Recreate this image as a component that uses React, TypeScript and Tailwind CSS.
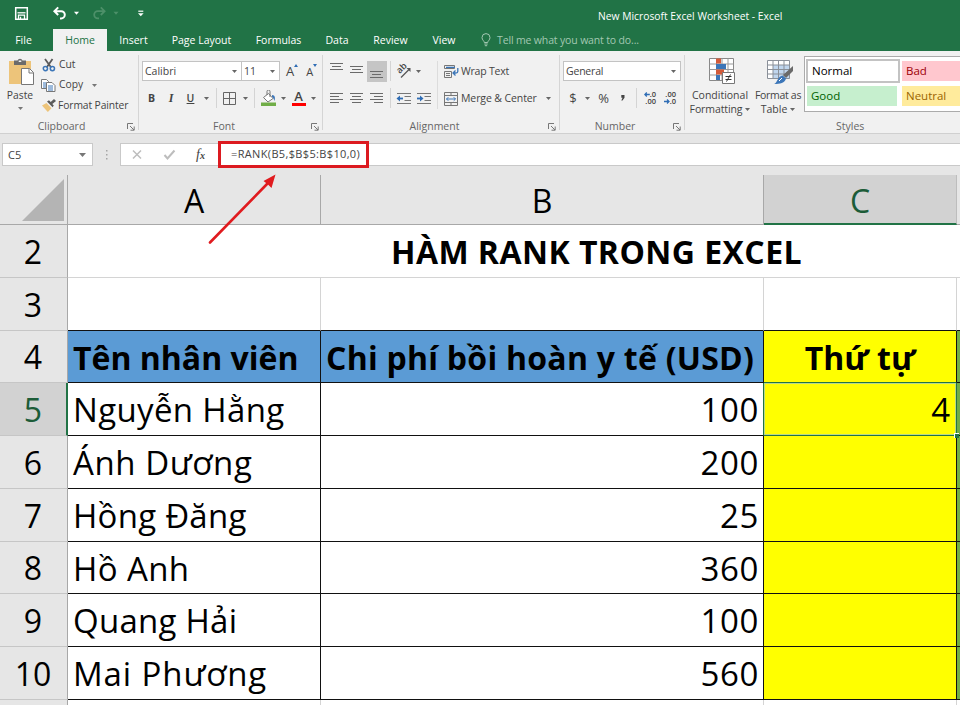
import type { ReactNode } from "react";
import clsx from "clsx";

const ROWS = [
  { n: 5, name: "Nguyễn Hằng", cost: "100", rank: "4", h: "h-[53px]", nameCls: "tracking-[0.35px]" },
  { n: 6, name: "Ánh Dương", cost: "200", rank: "", h: "h-[53px]", nameCls: "tracking-[0.6px]" },
  { n: 7, name: "Hồng Đăng", cost: "25", rank: "", h: "h-[53px]", nameCls: "tracking-[0.25px]" },
  { n: 8, name: "Hồ Anh", cost: "360", rank: "", h: "h-[52px]", nameCls: "tracking-[0.4px]" },
  { n: 9, name: "Quang Hải", cost: "100", rank: "", h: "h-[53px]", nameCls: "tracking-[0.25px]" },
  { n: 10, name: "Mai Phương", cost: "560", rank: "", h: "h-[53px]", nameCls: "tracking-[0.9px]" },
];

const TABS = [
  { label: "Insert", w: "w-[53px]" },
  { label: "Page Layout", w: "w-[83px]" },
  { label: "Formulas", w: "w-[71px]" },
  { label: "Data", w: "w-[46px]" },
  { label: "Review", w: "w-[61px]" },
  { label: "View", w: "w-[46px]" },
];

function Caret({ className }: { className?: string }) {
  return (
    <svg className={clsx("shrink-0", className)} width="5" height="3" viewBox="0 0 5 3">
      <path d="M0 0h5L2.5 3z" fill="currentColor" />
    </svg>
  );
}

function Slot({ w, children }: { w: string; children?: ReactNode }) {
  return <div className={clsx("flex h-full shrink-0 items-center justify-center", w)}>{children}</div>;
}

function Sep() {
  return <div className="h-5 w-px shrink-0 bg-[#d4d4d4]" />;
}

function Launcher() {
  return (
    <svg width="8" height="8" viewBox="0 0 8 8" fill="none" stroke="#777" strokeWidth="1">
      <path d="M.5 6V.5H6M3 3l4 4M7.2 3.5v3.7H3.5" />
    </svg>
  );
}

function Group({ label, w, launcher, pad, children }: { label: string; w: string; launcher?: boolean; pad?: string; children: ReactNode }) {
  return (
    <div className={clsx("flex h-[82px] shrink-0 flex-col", w)}>
      <div className="h-[67px]">{children}</div>
      <div className="flex h-[15px] items-center pt-[2px]">
        <div className={clsx("flex-1 text-center text-[#666]", pad)}>{label}</div>
        {launcher && (
          <div className="mr-[3px]">
            <Launcher />
          </div>
        )}
      </div>
    </div>
  );
}

function Divider() {
  return <div className="mt-1 h-[75px] w-px shrink-0 bg-[#d5d5d5]" />;
}

function Lines({ rows }: { rows: [number, number][] }) {
  return (
    <svg width="14" height="12" viewBox="0 0 14 12" stroke="#6a6a6a" strokeWidth="1">
      {rows.map(([a, b], i) => (
        <path key={i} d={`M${a} ${i * 3 + 1.5}H${b}`} />
      ))}
    </svg>
  );
}

function Indent({ right }: { right?: boolean }) {
  return (
    <svg width="16" height="13" viewBox="0 0 16 13" fill="none" className="shrink-0">
      <path d="M1 1.5h14M8.5 4.5H15M8.5 8.5H15M1 11.5h14" stroke="#777" />
      <path d={right ? "M1 6.5h4" : "M3 6.5h4"} stroke="#2f6db5" strokeWidth="1.8" />
      <path d={right ? "M4 3.5l3.500 3-3.500 3z" : "M4 3.500l-3.500 3 3.500 3z"} fill="#2f6db5" />
    </svg>
  );
}

function TitleBar() {
  return (
    <div className="flex h-[51px] flex-col bg-[#217346] text-white">
      <div className="flex h-[29px] items-center">
        <svg className="shrink-0" width="160" height="29" viewBox="0 0 160 29" fill="none">
          <path d="M15.7 7.7h11.6v11.6H15.7z" stroke="#fff" strokeWidth="1.5" />
          <path d="M17.5 12.8h8" stroke="#fff" strokeWidth="1.3" />
          <path d="M18.5 19v-3.8h6V19M20.5 19v-2.2" stroke="#fff" strokeWidth="1.3" />
          <path d="M54.5 11.2h6.7a3.6 3.6 0 0 1 0 7.2H60M58.2 7.4l-3.8 3.8 3.8 3.8" stroke="#fff" strokeWidth="2" />
          <path d="M74 11.7h5l-2.5 3z" fill="#fff" />
          <path d="M104.5 11.2h-6.7a3.6 3.6 0 0 0 0 7.2H99M100.8 7.4l3.8 3.8-3.8 3.8" stroke="#4d9069" strokeWidth="1.8" />
          <path d="M113.5 11.7h5l-2.5 3z" fill="#4d9069" />
          <path d="M138.3 11.2h5" stroke="#fff" strokeWidth="1.2" />
          <path d="M138 13.3h5.6l-2.8 3z" fill="#fff" />
        </svg>
        <div className="ml-[438px] mt-[5px] whitespace-nowrap text-[10.3px]">New Microsoft Excel Worksheet - Excel</div>
      </div>
      <div className="flex h-[22px] items-center whitespace-nowrap text-[10.5px]">
        <div className="w-[47px] pt-[2px] text-center">File</div>
        <div className="ml-1.5 flex h-full w-[54px] items-center justify-center bg-[#f1f1f1] pt-[2px] text-[#217346]">Home</div>
        {TABS.map((t) => (
          <div key={t.label} className={clsx("pt-[2px] text-center", t.w)}>{t.label}</div>
        ))}
        <svg className="ml-[14px]" width="10" height="14" viewBox="0 0 10 14" fill="none" stroke="#a3c8b2">
          <path d="M3.3 9.5C3.3 8 1 7 1 4.6a4 4 0 0 1 8 0C9 7 6.7 8 6.7 9.5zM3.3 11h3.4M3.8 12.7h2.4" />
        </svg>
        <div className="ml-[6px] pt-[2px] tracking-[-0.15px] text-[#a3c8b2]">Tell me what you want to do...</div>
      </div>
    </div>
  );
}

function Clipboard() {
  return (
    <Group label="Clipboard" w="w-[138px]" launcher pad="pr-[4px]">
      <div className="flex">
        <div className="flex w-10 flex-col items-center">
          <svg className="ml-[3px] mt-[6px]" width="27" height="29" viewBox="0 0 27 29">
            <path d="M1 4h22v23H1z" fill="#edc47a" />
            <path d="M6 3.5h3.5a2.7 2.7 0 0 1 5 0H18V8H6z" fill="#6b6b6b" />
            <path d="M10.7 3.5h2.6v1.6h-2.6z" fill="#f1f1f1" />
            <path d="M13.5 11.5h8l4 4v12h-12z" fill="#fff" stroke="#777" />
            <path d="M21 11.5v4.5h4.5" fill="none" stroke="#777" />
          </svg>
          <div className="mt-[2px] text-[10.3px]">Paste</div>
          <Caret className="mt-1 text-[#777]" />
        </div>
        <div className="flex flex-col pt-[3px] text-[10.3px]">
          <div className="flex h-[21px] items-center">
            <svg width="14" height="14" viewBox="0 0 14 14" fill="none" strokeWidth="1.5" className="mr-[3px] ml-[2px]">
              <path d="M3 1l6.2 8.5M10.5 1L4.6 9.5" stroke="#5b5b5b" strokeWidth="1.8" />
              <circle cx="3.4" cy="10.6" r="2.1" stroke="#3c76b8" />
              <circle cx="10.4" cy="10.6" r="2.1" stroke="#3c76b8" />
            </svg>
            Cut
          </div>
          <div className="flex h-[20px] items-center">
            <svg width="15" height="13" viewBox="0 0 15 13" fill="#fff" stroke="#777" className="mr-[3px] ml-px">
              <path d="M.5.5h5l2 2v7h-7z" />
              <path d="M2 4h3M2 6h3M2 8h3" stroke="#3c76b8" />
              <path d="M5.5 3.5h5.5l3 3v6H5.5z" />
              <path d="M7 7h5M7 9h5M7 11h5" stroke="#3c76b8" />
            </svg>
            Copy
            <Caret className="ml-[9px] text-[#777]" />
          </div>
          <div className="flex h-[21px] items-center whitespace-nowrap tracking-[-0.1px]">
            <svg width="14" height="13" viewBox="0 0 14 13" className="mr-[2px] ml-[2px]">
              <path d="M0 6.5L4.5 4l5 5.2L5.8 13z" fill="#edc47a" />
              <path d="M5 2.6l5.6 5.6 1.2-1.6-1.5-1.7L14 2 12 0 8.7 3 7 1.2z" fill="#5b5b5b" />
            </svg>
            Format Painter
          </div>
        </div>
      </div>
    </Group>
  );
}

function FontGroup() {
  return (
    <Group label="Font" w="w-[183px]" launcher pad="pr-[2px]">
      <div className="flex flex-col pl-[3px] pt-[10px]">
        <div className="flex h-5 items-center">
          <div className="flex h-5 w-[100px] items-center justify-between border border-[#c3c3c3] bg-white px-[2px] pr-1">
            <span className="pt-px text-[#444]">Calibri</span>
            <Caret className="text-[#666]" />
          </div>
          <div className="-ml-px flex h-5 w-[39px] items-center justify-between border border-[#c3c3c3] bg-white px-[2px] pr-1">
            <span className="pt-px text-[#444]">11</span>
            <Caret className="text-[#666]" />
          </div>
          <div className="ml-[6px] flex items-start">
            <span className="text-[13px] leading-5">A</span>
            <svg className="mt-[3px]" width="4" height="3" viewBox="0 0 4 3"><path d="M0 3h4L2 0z" fill="#2f6db5" /></svg>
          </div>
          <div className="ml-2 flex items-start">
            <span className="pt-[1px] text-[11px] leading-5">A</span>
            <svg className="mt-[3px]" width="4" height="3" viewBox="0 0 4 3"><path d="M0 0h4L2 3z" fill="#2f6db5" /></svg>
          </div>
        </div>
        <div className="mt-[7px] flex h-5 items-center">
          <Slot w="w-[19px]"><span className="pt-px font-bold">B</span></Slot>
          <Slot w="w-5"><span className="font-['Liberation_Serif'] text-[12px] font-bold italic">I</span></Slot>
          <Slot w="w-[19px]"><span className="pt-px font-semibold underline">U</span></Slot>
          <Slot w="w-3"><Caret className="text-[#666]" /></Slot>
          <Slot w="w-[4px]" />
          <Sep />
          <Slot w="w-[25px]">
            <svg width="13" height="13" viewBox="0 0 13 13" fill="none" stroke="#666"><path d="M.5.5h12v12H.5zM6.5 0v13M0 6.5h13" /></svg>
          </Slot>
          <Slot w="w-[7px]"><Caret className="text-[#666]" /></Slot>
          <Slot w="w-[5px]" />
          <Sep />
          <Slot w="w-[26px]">
            <svg width="15" height="16" viewBox="0 0 15 16" fill="none">
              <path d="M2.5 7.5l5-4 4.5 5-5 3.5z" fill="#fff" stroke="#777" />
              <path d="M6 5V1.5a1.5 1.5 0 0 1 3 0V7" stroke="#777" />
              <path d="M11 5c3 0 3.6 3 2.4 6-.8-2-.9-3.4-2.4-4z" fill="#3c76b8" />
              <path d="M0 12.5h15V16H0z" fill="#70ad47" />
            </svg>
          </Slot>
          <Slot w="w-[5px]"><Caret className="text-[#666]" /></Slot>
          <Slot w="w-[25px]">
            <div className="flex h-4 w-[14px] items-start justify-center border-b-[3px] border-[#f00] text-[13px] font-semibold leading-[13px]">A</div>
          </Slot>
          <Slot w="w-[5px]"><Caret className="text-[#666]" /></Slot>
        </div>
      </div>
    </Group>
  );
}

function Alignment() {
  return (
    <Group label="Alignment" w="w-[236px]" launcher pad="pr-[2px]">
      <div className="flex pl-1 pt-[10px]">
        <div className="flex w-[110px] flex-col">
          <div className="flex h-5 items-center">
            <Slot w="w-5"><div className="pb-1.5"><Lines rows={[[0, 13], [2, 11], [0, 13]]} /></div></Slot>
            <Slot w="w-5"><Lines rows={[[0, 13], [2, 11], [0, 13]]} /></Slot>
            <div className="flex h-[21px] w-5 items-end justify-center bg-[#c5c5c5]"><Lines rows={[[0, 13], [2, 11], [0, 13]]} /></div>
            <Slot w="w-[3px]" />
            <Sep />
            <Slot w="w-[25px]">
              <div className="relative h-[14px] w-[15px]">
                <span className="absolute left-0 -top-px -rotate-45 text-[9px] leading-[10px] font-semibold">ab</span>
                <svg className="absolute inset-0" width="15" height="14" viewBox="0 0 15 14" fill="none" stroke="#555">
                  <path d="M5 13.5L13 5.500" strokeWidth="1.2" />
                  <path d="M14.500 4v4L10.500 4z" fill="#555" stroke="none" />
                </svg>
              </div>
            </Slot>
            <Slot w="w-[5px]"><Caret className="text-[#666]" /></Slot>
          </div>
          <div className="mt-[7px] flex h-5 items-center">
            <Slot w="w-5"><Lines rows={[[0, 13], [0, 9], [0, 13], [0, 9]]} /></Slot>
            <Slot w="w-5"><Lines rows={[[0, 13], [2, 11], [0, 13], [2, 11]]} /></Slot>
            <Slot w="w-5"><Lines rows={[[0, 13], [4, 13], [0, 13], [4, 13]]} /></Slot>
            <Slot w="w-[3px]" />
            <Sep />
            <Slot w="w-[26px]"><Indent /></Slot>
            <Slot w="w-[14px]"><Indent right /></Slot>
          </div>
        </div>
        <div className="h-[48px] w-px bg-[#dcdcdc]" />
        <div className="flex flex-col pl-1.5 whitespace-nowrap">
          <div className="flex h-5 items-center pt-px tracking-[-0.2px]">
            <svg width="15" height="14" viewBox="0 0 15 14" fill="none" stroke="#777" className="mr-[2px]">
              <path d="M.5.5h10v3H.5zM.5 6.500h7v6h-7zM2 8.500h4M2 10.500h4" />
              <path d="M2 2.3h9M13.8 3v3.5c0 1-.8 1.5-2 1.5H9.5M11.5 5.5L9 8l2.5 2.5" stroke="#3c76b8" strokeWidth="1.3" />
            </svg>
            Wrap Text
          </div>
          <div className="mt-[7px] flex h-5 items-center pt-px tracking-[-0.1px]">
            <svg width="14" height="14" viewBox="0 0 14 14" fill="none" stroke="#777" className="mr-[3px]">
              <path d="M.5.5h13v13H.5zM.5 3.5h13M.5 10.5h13M7 .5v3M7 10.5v3" />
              <path d="M2.5 7h9M4.3 5.2L2.5 7l1.8 1.8M9.7 5.2L11.5 7 9.7 8.8" stroke="#3c76b8" />
            </svg>
            Merge &amp; Center
            <Caret className="ml-[9px] text-[#666]" />
          </div>
        </div>
      </div>
    </Group>
  );
}

function Decimals({ more }: { more?: boolean }) {
  const arrow = (
    <svg width="6" height="5" viewBox="0 0 6 5" fill="none" stroke="#2f6db5" strokeWidth="1.3">
      <path d={more ? "M.8 2.5h5M2.8.5l-2 2 2 2" : "M0 2.5h5M3 .5l2 2-2 2"} />
    </svg>
  );
  return (
    <div className="flex w-[15px] flex-col text-[7.5px] leading-[7px] font-semibold">
      <div className="flex items-center justify-end">{more && arrow}<span>{more ? ".0" : ".00"}</span></div>
      <div className="flex items-center justify-end">{!more && arrow}<span>{more ? ".00" : ".0"}</span></div>
    </div>
  );
}

function NumberGroup() {
  return (
    <Group label="Number" w="w-[124px]" launcher pad="pr-[3px]">
      <div className="flex flex-col pl-[3px] pt-[10px]">
        <div className="flex h-5 w-[118px] items-center justify-between border border-[#c3c3c3] bg-white pl-[2px] pr-1">
          <span className="pt-px tracking-[-0.2px]">General</span>
          <Caret className="text-[#666]" />
        </div>
        <div className="mt-[7px] flex h-5 items-center text-[13px]">
          <Slot w="w-5"><span className="pt-px">$</span></Slot>
          <Slot w="w-[9px]"><Caret className="text-[#666]" /></Slot>
          <Slot w="w-[23px]"><span className="pt-px">%</span></Slot>
          <Slot w="w-[15px]">
            <svg width="4" height="6" viewBox="0 0 4 6"><path d="M.3 0h3.2v2.7L1.5 5.5H.3L1.6 2.7H.3z" fill="#444" /></svg>
          </Slot>
          <Slot w="w-[6px]" />
          <Sep />
          <Slot w="w-[23px]"><Decimals more /></Slot>
          <Slot w="w-[17px]"><Decimals /></Slot>
        </div>
      </div>
    </Group>
  );
}

function Styles() {
  return (
    <div className="flex h-[82px] flex-1 flex-col overflow-hidden">
      <div className="flex h-[67px] whitespace-nowrap">
        <div className="flex w-[70px] shrink-0 flex-col items-center pt-[6px] leading-[14px]">
          <svg className="ml-[3px]" width="28" height="28" viewBox="0 0 28 28" fill="none">
            <path d="M1.5 1.5h24v22h-24z" fill="#fff" stroke="#888" />
            <path d="M1.5 7h24M1.5 12.5h24M1.5 18h24M8.5 1.5v22M14 1.5v22M20 1.5v22" stroke="#999" />
            <path d="M8 1.5h5v5H8zM8 12.5h8v5H8z" fill="#d35b3a" />
            <path d="M8 7h10v5H8zM8 18h4v5H8z" fill="#3c76b8" />
            <path d="M14.5 15.5h12v11h-12z" fill="#fff" stroke="#777" />
            <path d="M17.5 19.5h6M17.5 22.5h6M22.5 17.5l-4 7" stroke="#333" />
          </svg>
          <div className="mt-[3px]">Conditional</div>
          <div className="flex items-center tracking-[-0.1px]">Formatting<Caret className="ml-[3px] text-[#666]" /></div>
        </div>
        <div className="flex w-[46px] shrink-0 flex-col items-center pt-[6px] leading-[14px]">
          <svg className="ml-[3px]" width="28" height="28" viewBox="0 0 28 28" fill="none">
            <path d="M1.5 3.5h22v18h-22z" fill="#fff" />
            <path d="M7 8h17v14H7z" fill="#c0d6ee" />
            <path d="M1.5 3.5h22v18h-22zM1.5 8h22M1.5 12.5h22M1.5 17h22M7 3.5v18M12.5 3.5v18M18 3.5v18" stroke="#8a9099" />
            <path d="M27 9v5l-7 7-3-3z" fill="#6a6a6a" />
            <path d="M16.5 18.5l3.5 3c-1 4.5-6 5.5-12 5.5 3.5-1 3-7 8.5-8.5z" fill="#3c76b8" />
            <path d="M13 24l3-3" stroke="#fff" />
          </svg>
          <div className="mt-[3px] tracking-[-0.3px]">Format as</div>
          <div className="flex items-center">Table<Caret className="ml-[3px] text-[#666]" /></div>
        </div>
        <div className="ml-[3px] mt-[5px] grid h-[56px] w-[190px] shrink-0 grid-cols-[96px_90px] grid-rows-[26px_20px] border border-[#ababab] bg-white pt-px text-[11.5px]">
          <div className="mt-px ml-px flex h-6 w-[94px] items-center border-2 border-[#c3c3c3] bg-white pl-1 text-black">Normal</div>
          <div className="ml-px mt-[3px] flex h-5 items-center bg-[#ffc7ce] pl-1 text-[#9c0006]">Bad</div>
          <div className="ml-[2px] mt-[2px] flex h-5 w-[90px] items-center bg-[#c6efce] pl-1 text-[#006100]">Good</div>
          <div className="ml-px mt-[2px] flex h-5 items-center bg-[#ffeb9c] pl-1 text-[#9c6500]">Neutral</div>
        </div>
      </div>
      <div className="flex h-[15px] items-center pt-[2px] pl-[151px] text-[#666]">Styles</div>
    </div>
  );
}

function FormulaBar() {
  return (
    <div className="flex h-[41px] items-start pl-0.5 pt-[9px] text-[10.5px] text-[#444]">
      <div className="flex h-[23px] w-[91px] items-center justify-between border border-[#c9c9c9] bg-white pl-[5px] pr-1.5">
        <span className="pt-px text-[11px]">C5</span>
        <svg width="7" height="4" viewBox="0 0 7 4"><path d="M0 0h7L3.5 4z" fill="#777" /></svg>
      </div>
      <svg className="ml-3" width="3" height="23" viewBox="0 0 3 23" fill="#a5a5a5">
        <path d="M1 7h1.5v1.5H1zM1 11h1.5v1.5H1zM1 15h1.5v1.5H1z" />
      </svg>
      <div className="ml-3 flex h-[23px] flex-1 items-center border border-r-0 border-[#c9c9c9] bg-white">
        <svg width="75" height="21" viewBox="0 0 75 21" fill="none" stroke="#bdbdbd" strokeWidth="1.5">
          <path d="M12 6.5l8 8M20 6.5l-8 8" />
          <path d="M43.500 11l3 3.500 7-8" strokeWidth="2" />
        </svg>
        <div className="flex w-[22px] items-baseline font-['Liberation_Serif'] text-[14px] leading-none text-[#444] italic">
          f<span className="text-[10px] font-bold">x</span>
        </div>
        {/* highlighted formula with the pointer arrow */}
        <div className="relative flex h-[27px] w-[151px] items-center border-[3px] border-[#dc1a20] pl-[10px] text-[11px] tracking-[0.35px]">
          =RANK(B5,$B$5:B$10,0)
          <svg className="absolute -left-[14px] top-[26px] z-10" width="74" height="76" viewBox="0 0 74 76">
            <path d="M3 72.5L61 13" stroke="#e01b1f" strokeWidth="2.6" strokeLinecap="round" />
            <path d="M68.5 4.5L64.5 18 61 14.5 56.5 11z" fill="#e01b1f" />
          </svg>
        </div>
      </div>
    </div>
  );
}

function RowHead({ n, active }: { n: number; active?: boolean }) {
  return (
    <div
      className={clsx(
        "flex w-[68px] shrink-0 items-center justify-center border-b border-b-[#c6c6c6] pt-px text-[32px] font-normal",
        active ? "border-r-2 border-r-[#217346] bg-[#d2d2d2] pr-0 text-[#1c5c38]" : "border-r border-r-[#a8a8a8] bg-[#e6e6e6] pr-px text-black",
      )}
    >
      {n}
    </div>
  );
}

function Sheet() {
  return (
    <div className="flex flex-1 flex-col overflow-hidden text-black">
      <div className="flex h-[50px] shrink-0 text-[32px]">
        <div className="flex w-[68px] items-end justify-end border-b border-r border-[#a8a8a8] pb-[3px] pr-[3px]">
          <svg width="42" height="42" viewBox="0 0 42 42"><path d="M42 0v42H0z" fill="#b4b4b4" /></svg>
        </div>
        <div className="flex w-[253px] items-center justify-center border-b border-r border-[#a8a8a8] pt-[2px]">A</div>
        <div className="flex w-[443px] items-center justify-center border-b border-r border-[#a8a8a8] pt-[2px]">B</div>
        <div className="flex w-[193px] items-center justify-center border-b-2 border-r border-b-[#217346] border-r-[#bdbdbd] bg-[#d2d2d2] pt-[3px] text-[#1c5c38]">C</div>
        <div className="flex-1 border-b border-[#a8a8a8]" />
      </div>
      <div className="flex h-[53px] shrink-0">
        <RowHead n={2} />
        <div className="flex flex-1 items-center border-b border-[#d4d4d4] bg-white pl-[323px] pt-px text-[32px] font-bold tracking-[0.45px] whitespace-nowrap">HÀM RANK TRONG EXCEL</div>
      </div>
      <div className="flex h-[53px] shrink-0">
        <RowHead n={3} />
        <div className="w-[253px] border-b border-r border-b-[#111] border-r-[#d4d4d4] bg-white" />
        <div className="w-[443px] border-b border-r border-b-[#111] border-r-[#d4d4d4] bg-white" />
        <div className="w-[193px] border-b border-r border-b-[#111] border-r-[#d4d4d4] bg-white" />
        <div className="flex-1 border-b border-[#111] bg-white" />
      </div>
      <div className="flex h-[52px] shrink-0 whitespace-nowrap text-[32px] font-bold">
        <RowHead n={4} />
        <div className="flex w-[253px] items-center border-b border-r border-[#111] bg-[#5b9bd5] pl-[5px] pt-[2px]">Tên nhân viên</div>
        <div className="flex w-[443px] items-center border-b border-r border-[#111] bg-[#5b9bd5] pl-[5px] pt-[2px] tracking-[0.25px]">Chi phí bồi hoàn y tế (USD)</div>
        <div className="flex w-[193px] items-center justify-center border-b border-r border-b-[#217346] border-r-[#111] bg-[#ff0] pt-[2px]">Thứ tự</div>
        <div className="flex-1 border-b border-b-[#111] bg-[#70ad47]" />
      </div>
      {ROWS.map((r) => (
        <div key={r.n} className={clsx("flex shrink-0 whitespace-nowrap text-[33px]", r.h)}>
          <RowHead n={r.n} active={r.n === 5} />
          <div className="flex w-[253px] items-center border-b border-r border-[#111] bg-white pl-[5px] pt-[2px]">
            <span className={r.nameCls}>{r.name}</span>
          </div>
          <div
            className={clsx(
              "flex w-[443px] items-center justify-end border-b border-r border-b-[#111] bg-white pr-1 pt-[2px] tracking-[0.6px]",
              r.n === 5 ? "border-r-[#217346]" : "border-r-[#111]",
            )}
          >
            {r.cost}
          </div>
          <div
            className={clsx(
              "relative flex w-[193px] items-center justify-end border-b border-r bg-[#ff0] pr-[6px] pt-[2px]",
              r.n === 5 ? "border-[#217346] shadow-[inset_0_0_0_1px_#b8d98a]" : "border-[#111]",
            )}
          >
            {r.rank}
            {r.n === 5 && <div className="absolute -bottom-[3px] -right-[3px] z-10 size-[5px] border-l border-t border-white bg-[#217346]" />}
          </div>
          <div className="flex-1 border-b border-[#111] bg-[#70ad47]" />
        </div>
      ))}
      <div className="flex flex-1">
        <div className="w-[68px] border-r border-[#a8a8a8] bg-[#e6e6e6]" />
        <div className="w-[253px] border-r border-[#d4d4d4] bg-white" />
        <div className="w-[443px] border-r border-[#d4d4d4] bg-white" />
        <div className="w-[193px] border-r border-[#d4d4d4] bg-white" />
        <div className="flex-1 bg-white" />
      </div>
    </div>
  );
}

export default function App() {
  return (
    <div className="flex h-[705px] w-[960px] flex-col overflow-hidden bg-[#e6e6e6] font-['Open_Sans','Noto_Sans',sans-serif] text-[#444]">
      <TitleBar />
      <div className="flex h-[83px] shrink-0 border-b border-[#d0d0d0] bg-[#f1f1f1] text-[10.5px]">
        <Clipboard />
        <Divider />
        <FontGroup />
        <Divider />
        <Alignment />
        <Divider />
        <NumberGroup />
        <Divider />
        <Styles />
      </div>
      <FormulaBar />
      <Sheet />
    </div>
  );
}
